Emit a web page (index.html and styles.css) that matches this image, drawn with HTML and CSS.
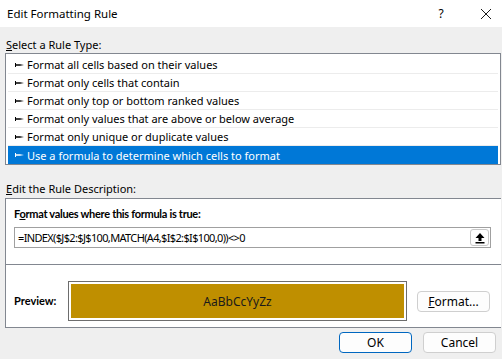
FILE: index.html
```html
<!DOCTYPE html>
<html>
<head>
<meta charset="utf-8">
<link rel="stylesheet" href="styles.css">
</head>
<body>
<div class="dialog">
  <div class="titlebar">
    <span class="title">Edit Formatting Rule</span>
    <span class="tb-help">?</span>
    <span class="tb-close">
      <svg width="12" height="12" viewBox="0 0 12 12"><path d="M1 1 L11 11 M11 1 L1 11" stroke="#1a1a1a" stroke-width="1"/></svg>
    </span>
  </div>
  <div class="body">
    <div class="label label-top"><u>S</u>elect a Rule Type:</div>
    <ul class="rules">
      <li class="rule"><svg class="bullet" width="9" height="6" viewBox="0 0 9 6"><path d="M0 1 H1 V5 H0 Z M1 2.2 H5 L9 3 L5 3.8 H1 Z"/></svg>Format all cells based on their values</li>
      <li class="rule"><svg class="bullet" width="9" height="6" viewBox="0 0 9 6"><path d="M0 1 H1 V5 H0 Z M1 2.2 H5 L9 3 L5 3.8 H1 Z"/></svg>Format only cells that contain</li>
      <li class="rule"><svg class="bullet" width="9" height="6" viewBox="0 0 9 6"><path d="M0 1 H1 V5 H0 Z M1 2.2 H5 L9 3 L5 3.8 H1 Z"/></svg>Format only top or bottom ranked values</li>
      <li class="rule"><svg class="bullet" width="9" height="6" viewBox="0 0 9 6"><path d="M0 1 H1 V5 H0 Z M1 2.2 H5 L9 3 L5 3.8 H1 Z"/></svg>Format only values that are above or below average</li>
      <li class="rule"><svg class="bullet" width="9" height="6" viewBox="0 0 9 6"><path d="M0 1 H1 V5 H0 Z M1 2.2 H5 L9 3 L5 3.8 H1 Z"/></svg>Format only unique or duplicate values</li>
      <li class="rule selected"><svg class="bullet" width="9" height="6" viewBox="0 0 9 6"><path d="M0 1 H1 V5 H0 Z M1 2.2 H5 L9 3 L5 3.8 H1 Z"/></svg>Use a formula to determine which cells to format</li>
    </ul>
    <div class="label label-desc"><u>E</u>dit the Rule Description:</div>
    <div class="panel">
      <div class="panel-top">
        <div class="bold-label formula-label">F<u>o</u>rmat values where this formula is true:</div>
        <div class="formula">
          <span class="formula-text">=INDEX($J$2:$J$100,MATCH(A4,$I$2:$I$100,0))&lt;&gt;0</span>
          <span class="collapse-btn">
            <svg width="12" height="12" viewBox="0 0 12 12"><path d="M6 1 L10.5 6 H7.5 V9 H4.5 V6 H1.5 Z" fill="#000"/><rect x="1.5" y="10" width="9" height="1.5" fill="#000"/></svg>
          </span>
        </div>
      </div>
      <div class="panel-bottom">
        <div class="bold-label preview-label">Preview:</div>
        <div class="preview-frame"><div class="preview-fill">AaBbCcYyZz</div></div>
        <button class="btn format-btn"><u>F</u>ormat...</button>
      </div>
    </div>
    <div class="footer">
      <button class="btn ok-btn">OK</button>
      <button class="btn">Cancel</button>
    </div>
  </div>
</div>
</body>
</html>
```

FILE: styles.css
```css
* { box-sizing: border-box; }
html, body { margin: 0; padding: 0; }
body {
  width: 502px;
  height: 359px;
  overflow: hidden;
  background: #efefef;
  font-family: "Noto Sans", "Segoe UI", "Liberation Sans", sans-serif;
  font-size: 11px;
  color: #000;
}
.dialog { width: 502px; }
.titlebar {
  height: 27px;
  background: #fff;
  display: flex;
  align-items: center;
  padding-left: 7px;
}
.title { font-size: 11.5px; flex: 1; }
.tb-help { width: 12px; text-align: center; margin-right: 33px; font-size: 12px; }
.tb-close { width: 12px; height: 12px; margin-right: 10px; display: flex; }
.body { padding: 0 1px 0 5px; }
.label { height: 13px; line-height: 13px; padding-left: 1px; }
.label-top { margin-top: 11px; margin-bottom: 2px; }
.rules {
  list-style: none;
  margin: 0;
  padding: 2px 2px 0 2px;
  background: #fff;
  border: 1px solid #828790;
}
.rule {
  height: 18px;
  line-height: 17px;
  border-bottom: 1px solid #ececec;
  display: flex;
  align-items: center;
  padding-left: 7px;
  white-space: nowrap;
}
.rule:last-child { border-bottom: none; }
.bullet { margin-right: 3px; fill: #000; flex: none; }
.selected { background: #0078d7; color: #fff; }
.selected .bullet { fill: #fff; }
.label-desc { margin-top: 17px; margin-bottom: 3px; }
.panel {
  background: #fff;
  border: 1px solid #828790;
  border-right: none;
}
.panel-top {
  height: 66px;
  padding: 8px 10px 0 8px;
  border-bottom: 1px solid #828790;
}
.bold-label {
  font-family: Lato, "Noto Sans", sans-serif;
  font-weight: 700;
  font-size: 11px;
  line-height: 14px;
  height: 14px;
}
.formula-label { letter-spacing: -0.3px; }
.formula {
  margin-top: 6px;
  height: 21px;
  border: 1px solid #a0a0a0;
  display: flex;
  align-items: center;
  padding-left: 3px;
}
.formula-text { flex: 1; white-space: nowrap; letter-spacing: -0.65px; }
.collapse-btn {
  width: 19px;
  height: 17px;
  border: 1px solid #c8c8c8;
  border-radius: 3px;
  background: #fff;
  display: flex;
  align-items: center;
  justify-content: center;
  margin-right: 1px;
}
.panel-bottom {
  height: 62px;
  display: flex;
  align-items: center;
  padding: 16px 0 6px 8px;
}
.preview-label { width: 54px; }
.preview-frame {
  width: 339px;
  height: 40px;
  border: 1px solid #6d6d6d;
  padding: 2px;
  background: #fff;
}
.preview-fill {
  height: 100%;
  background: #bf8f00;
  display: flex;
  align-items: center;
  justify-content: center;
  font-size: 12px;
  color: #1a1a1a;
}
.btn {
  font-family: inherit;
  font-size: 12px;
  color: #000;
  width: 73px;
  height: 21px;
  border: 1px solid #cfcfcf;
  border-radius: 4px;
  background: #fdfdfd;
  padding: 0;
  line-height: 19px;
}
.format-btn { margin-left: 10px; }
.footer {
  display: flex;
  justify-content: flex-end;
  gap: 11px;
  padding: 4px 5px 0 0;
}
.ok-btn { border-color: #0067c0; }
```
